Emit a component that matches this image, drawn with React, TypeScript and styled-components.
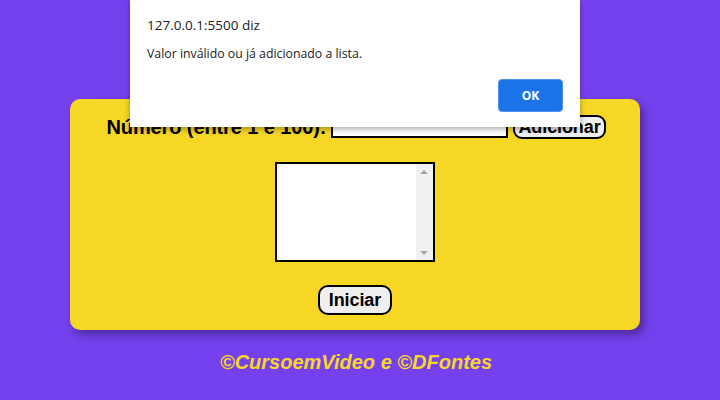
import React from "react";
import styled, { createGlobalStyle } from "styled-components";

const Global = createGlobalStyle`
  html, body { margin: 0; padding: 0; }
  body {
    background: #7541ee;
    font-family: Arial, "Liberation Sans", sans-serif;
    width: 720px;
    height: 400px;
    overflow: hidden;
  }
`;

const Page = styled.main`
  position: relative;
  width: 720px;
  height: 400px;
  padding: 99px 80px 0 70px;
  box-sizing: border-box;
  display: flex;
  flex-direction: column;
  align-items: stretch;
`;

const Card = styled.section`
  background: #f6d725;
  border-radius: 10px;
  box-shadow: 4px 5px 10px rgba(0, 0, 0, 0.35);
  height: 231px;
  box-sizing: border-box;
  padding-top: 16px;
  display: flex;
  flex-direction: column;
  align-items: center;
`;

const Row = styled.div`
  display: flex;
  align-items: center;
  gap: 5px;
  height: 24px;
  padding-left: 2px;
`;

const Label = styled.label`
  font-family: "Liberation Sans", Arial, sans-serif;
  font-weight: bold;
  font-size: 20px;
  letter-spacing: -0.1px;
  color: #000;
`;

const NumberInput = styled.input`
  width: 177px;
  height: 20px;
  box-sizing: border-box;
  border: 2px solid #000;
  background: #fff;
  margin-top: 2px;
  padding: 0;
  outline: none;
`;

const Button = styled.button`
  font-family: "Liberation Sans", Arial, sans-serif;
  font-weight: bold;
  font-size: 18px;
  letter-spacing: -0.1px;
  color: #000;
  background: #efefef;
  border: 2px solid #000;
  border-radius: 9px;
  padding: 0 3px;
  height: 24px;
  line-height: 20px;
  cursor: pointer;
`;

const BigButton = styled(Button)`
  height: 30px;
  padding: 0 9px;
  font-size: 18px;
  border-radius: 10px;
`;

const ListBox = styled.div`
  margin-top: 23px;
  margin-right: 1px;
  width: 160px;
  height: 100px;
  box-sizing: border-box;
  border: 2px solid #000;
  background: #fff;
  display: flex;
  justify-content: flex-end;
`;

const ScrollTrack = styled.div`
  width: 17px;
  background: #f1f1f1;
  display: flex;
  flex-direction: column;
  justify-content: space-between;
  align-items: center;
  padding: 6px 0 5px;
`;

const Arrow = styled.div<{ $down?: boolean }>`
  width: 0;
  height: 0;
  border-left: 4px solid transparent;
  border-right: 4px solid transparent;
  ${(p) =>
    p.$down
      ? "border-top: 4px solid #a3a3a3;"
      : "border-bottom: 4px solid #a3a3a3;"}
`;

const StartRow = styled.div`
  margin-top: 23px;
  display: flex;
  justify-content: center;
`;

const Footer = styled.footer`
  margin-top: 21px;
  text-align: center;
  font-family: "Liberation Sans", Arial, sans-serif;
  font-weight: bold;
  font-style: italic;
  font-size: 20px;
  color: #f6d725;
  padding-left: 2px;
`;

const Dialog = styled.div`
  position: absolute;
  left: 130px;
  top: 0;
  width: 450px;
  height: 127px;
  background: #fff;
  box-shadow: 0 2px 6px rgba(0, 0, 0, 0.35);
  box-sizing: border-box;
  padding: 15px 17px 0 17px;
  font-family: "Open Sans", "Noto Sans", sans-serif;
  color: #202124;
  display: flex;
  flex-direction: column;
`;

const DialogTitle = styled.div`
  font-size: 13.5px;
  line-height: 20px;
`;

const DialogMessage = styled.div`
  font-size: 12.3px;
  line-height: 18px;
  margin-top: 10px;
`;

const DialogActions = styled.div`
  display: flex;
  justify-content: flex-end;
  margin-top: 16px;
`;

const OkButton = styled.button`
  width: 65px;
  height: 33px;
  background: #1a73e8;
  border: 1px solid #4c8ff0;
  border-radius: 4px;
  color: #fff;
  font-family: "Open Sans", "Noto Sans", sans-serif;
  font-weight: bold;
  font-size: 12px;
  cursor: pointer;
`;

export default function App() {
  return (
    <>
      <Global />
      <Page>
        <Card>
          <Row>
            <Label htmlFor="num">Número (entre 1 e 100):</Label>
            <NumberInput id="num" type="text" />
            <Button>Adicionar</Button>
          </Row>
          <ListBox>
            <ScrollTrack>
              <Arrow />
              <Arrow $down />
            </ScrollTrack>
          </ListBox>
          <StartRow>
            <BigButton>Iniciar</BigButton>
          </StartRow>
        </Card>
        <Footer>©CursoemVideo e ©DFontes</Footer>
        <Dialog>
          <DialogTitle>127.0.0.1:5500 diz</DialogTitle>
          <DialogMessage>Valor inválido ou já adicionado a lista.</DialogMessage>
          <DialogActions>
            <OkButton>OK</OkButton>
          </DialogActions>
        </Dialog>
      </Page>
    </>
  );
}
